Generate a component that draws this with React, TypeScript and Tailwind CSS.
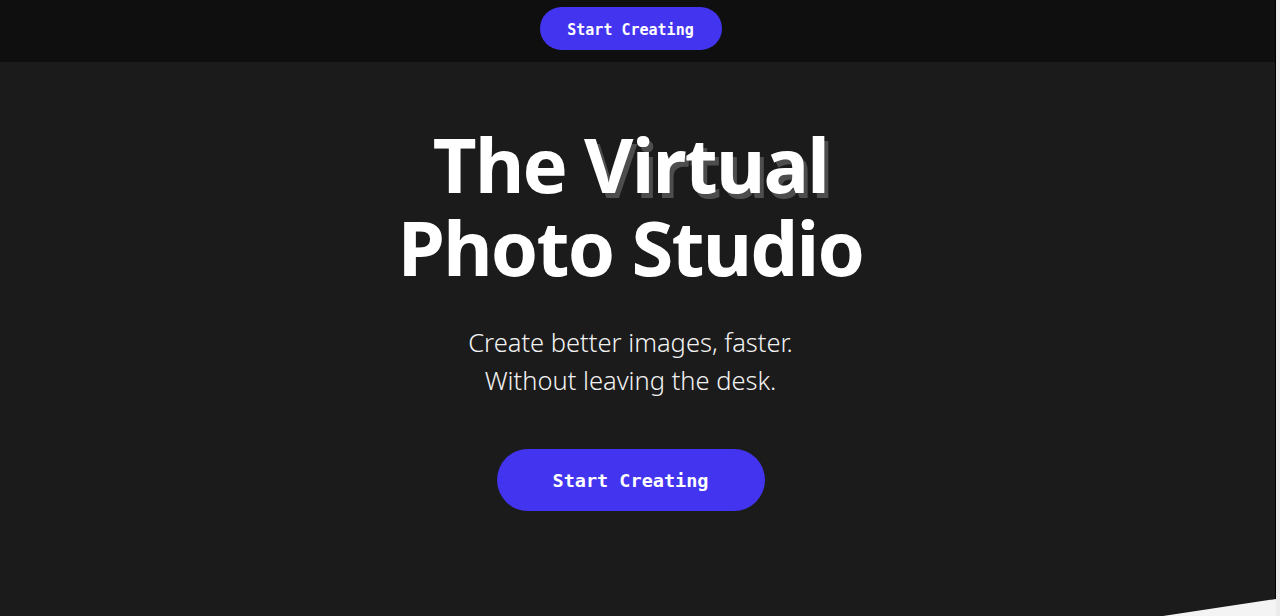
export default function App() {
  const mono = { fontFamily: '"DejaVu Sans Mono", "Liberation Mono", monospace' };
  const sans = { fontFamily: '"Noto Sans", Inter, sans-serif' };

  return (
    <div className="relative flex h-[616px] w-full overflow-hidden bg-[#ececec]">
      <div className="flex w-[1276px] flex-col border-r border-black bg-[#1b1b1b]">
        {/* Top bar */}
        <header className="flex h-[62px] justify-center bg-[#0f0f0f] pr-[14px] pt-[7px]">
          <button
            className="flex h-[43px] w-[182px] items-center justify-center rounded-full bg-[#4334f0] pt-[3px] text-[15px] font-bold text-white"
            style={mono}
          >
            Start Creating
          </button>
        </header>

        {/* Hero */}
        <section className="flex flex-1 flex-col items-center pr-[14px] pt-[60px] text-center" style={sans}>
          <h1 className="text-[76px] font-bold leading-[83px] tracking-[-1.8px] text-white">
            The <span className="[text-shadow:4px_5px_0_#4d4d4d]">Virtual</span>
            <br />
            Photo Studio
          </h1>
          <p className="mt-[35px] text-[25.5px] font-light leading-[38px] text-[#f2f2f2]">
            Create better images, faster.
            <br />
            Without leaving the desk.
          </p>
          <button
            className="mt-[50px] flex h-[62px] w-[268px] items-center justify-center rounded-full bg-[#4334f0] pt-[2px] text-[18.5px] font-bold text-white"
            style={mono}
          >
            Start Creating
          </button>
        </section>
      </div>

      {/* slanted edge of the next section */}
      <svg className="absolute bottom-0 left-0" width="1280" height="616" viewBox="0 0 1280 616">
        <polygon points="1163,616 1276,599 1276,616" fill="#f4f4f4" />
      </svg>
    </div>
  );
}
